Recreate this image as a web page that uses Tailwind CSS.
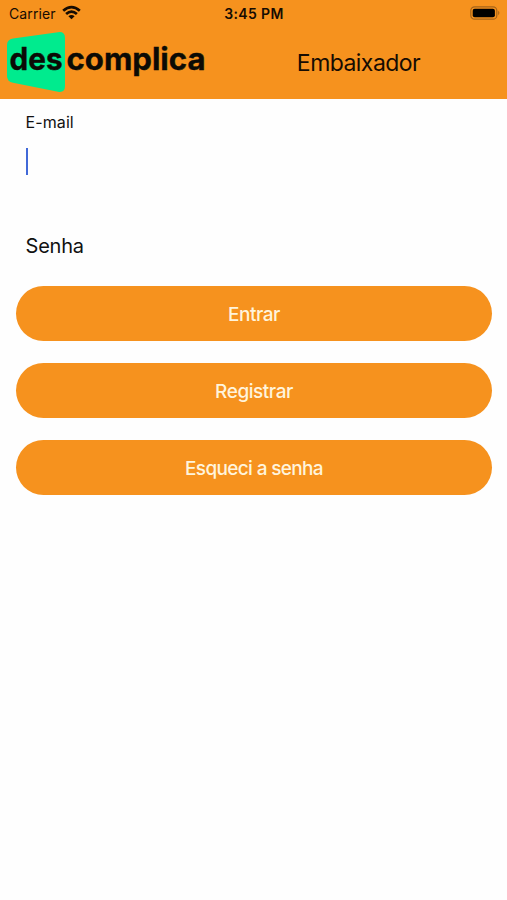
<!DOCTYPE html>
<html lang="pt-BR">
<head>
<meta charset="utf-8">
<title>Embaixador</title>
<script src="https://cdn.jsdelivr.net/npm/@tailwindcss/browser@4"></script>
</head>
<body class="bg-[#fefefe] font-['Inter',sans-serif] text-[#111]">
<main class="flex h-[900px] w-[507px] flex-col overflow-hidden">
  <header class="h-[98.5px] shrink-0 bg-[#f6921e] text-[#160c02]">
    <div class="grid h-7 grid-cols-3 items-center pl-[9px] pr-[7px]">
      <div class="flex items-center gap-[6px]">
        <span class="text-[14px] leading-7 tracking-[0.1px]">Carrier</span>
        <svg class="-mt-[3px] h-[15px] w-[19px]" viewBox="0 0 19 15" fill="none" stroke="currentColor" stroke-width="2.7">
          <path d="M1.2 5.8Q9.5-1.7 17.8 5.8"/>
          <path d="M4.1 9Q9.5 4.1 14.9 9"/>
          <path d="M9.5 14.2L6.4 11.2Q9.5 8.7 12.6 11.2Z" fill="currentColor" stroke="none"/>
        </svg>
      </div>
      <span class="-ml-[1px] text-center text-[14px] font-semibold leading-7 tracking-[0.35px]">3:45 PM</span>
      <svg class="-mt-[2px] h-[14px] w-[30px] justify-self-end" viewBox="0 0 30 14">
        <rect x=".8" y=".8" width="26" height="12.4" rx="3.8" fill="none" stroke="#a5641a" stroke-width="1.2"/>
        <rect x="2.7" y="2.7" width="22.2" height="8.6" rx="2" fill="#000"/>
        <path d="M28.2 4.8Q30.6 7 28.2 9.2Z" fill="#a5641a"/>
      </svg>
    </div>
    <div class="flex h-[70px] items-center">
      <svg class="h-[70px] w-[210px] shrink-0" viewBox="0 28 210 70" role="img" aria-label="descomplica">
        <path d="M13 38.5L58 32.2Q65 31.3 65 38V86Q65 93 58 91.8L13 82.8Q7 81.5 7 76V45Q7 39.5 13 38.5Z" fill="#00eb8e"/>
        <g fill="#0b0b05" stroke="#0b0b05" stroke-width=".4" font-family="Inter, sans-serif" font-weight="700" font-size="31">
          <text x="9.5" y="70.3" textLength="53" lengthAdjust="spacingAndGlyphs">des</text>
          <text x="66.5" y="70.3" textLength="139" lengthAdjust="spacingAndGlyphs">complica</text>
        </g>
      </svg>
      <h1 class="flex-1 text-center text-[23px] leading-7 tracking-[-0.55px]">Embaixador</h1>
    </div>
  </header>
  <form class="flex flex-col px-[15.5px]">
    <label class="mt-[13px] pl-[10px] text-[16px] leading-5 tracking-[0.1px]">E-mail</label>
    <div class="ml-[10px] mt-[16px] h-[27px] w-[2.5px] bg-[#4169d8]"></div>
    <label class="mt-[57.2px] pl-[10px] text-[20px] leading-7 tracking-[-0.2px]">Senha</label>
    <div class="mt-[26.8px] flex flex-col gap-[22px] text-[19px] font-medium text-[#fff4dc]">
      <button type="button" class="h-[54.7px] rounded-full bg-[#f6921e] pl-[1px] pt-[3.5px] tracking-[-0.5px]">Entrar</button>
      <button type="button" class="h-[54.7px] rounded-full bg-[#f6921e] pl-[1px] pt-[3.5px] tracking-[-0.45px]">Registrar</button>
      <button type="button" class="h-[54.7px] rounded-full bg-[#f6921e] pl-[1px] pt-[3.5px] tracking-[-0.65px]">Esqueci a senha</button>
    </div>
  </form>
</main>
</body>
</html>
